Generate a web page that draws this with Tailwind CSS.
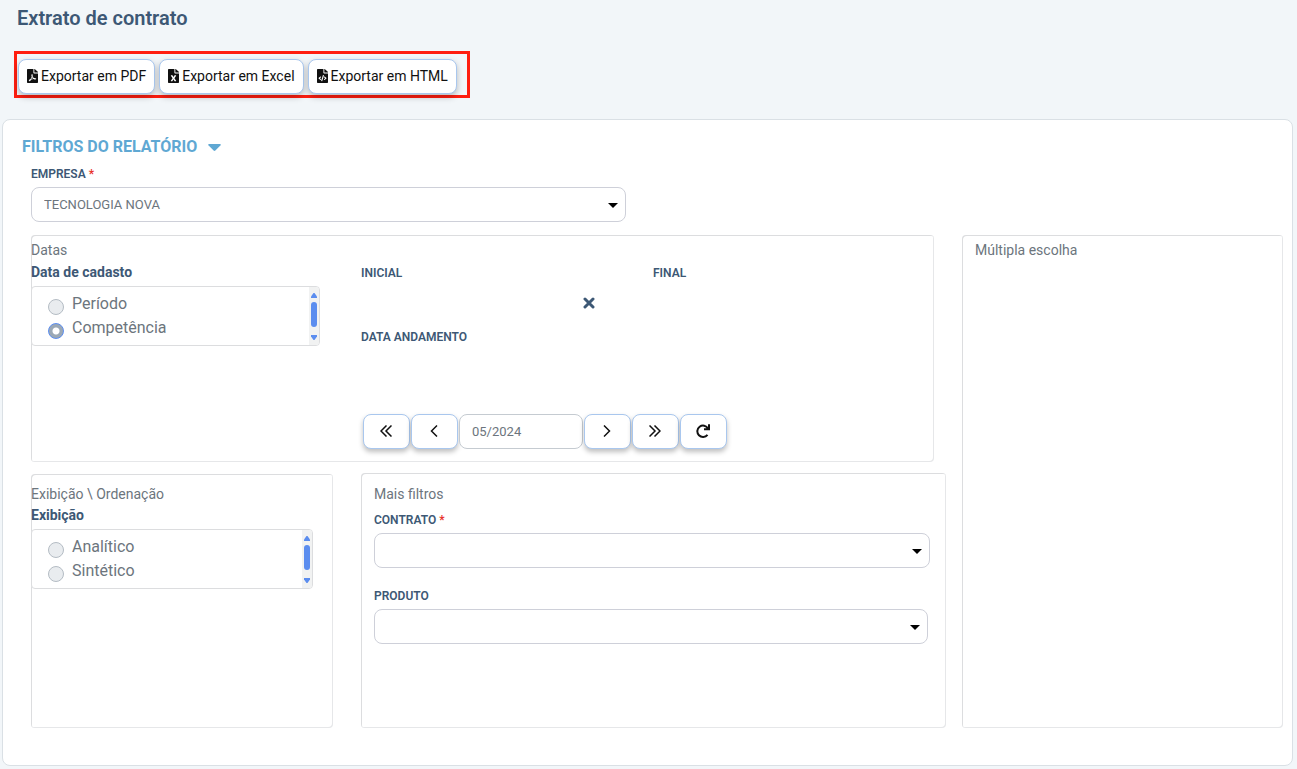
<!DOCTYPE html>
<html lang="pt-BR">
<head>
<meta charset="utf-8">
<meta name="viewport" content="width=device-width, initial-scale=1">
<title>Extrato de contrato</title>
<script src="https://cdn.jsdelivr.net/npm/@tailwindcss/browser@4"></script>
</head>
<body class="min-h-screen bg-[#f2f6f9] font-['Roboto',sans-serif] text-sm text-[#6c757d]">
<header class="px-[17px] pt-1.5">
  <h1 class="text-xl leading-6 font-semibold text-[#3d5875]">Extrato de contrato</h1>
</header>

<div class="mt-[21px] ml-[14px] flex w-fit gap-1 border-3 border-[#ff1e10] pt-[5px] pr-[10px] pb-px pl-px text-[#111]">
  <button type="button" class="flex h-[35px] items-center gap-[3px] rounded-lg border border-[#a9c7ee] bg-white px-2 pb-0.5 shadow-[0_3px_6px_rgba(0,0,0,0.25)]">
    <svg class="h-[14px] w-[11px]" viewBox="0 0 384 512" preserveAspectRatio="none" fill="currentColor" aria-hidden="true"><path d="M181.9 256.1c-5-16-4.9-46.9-2-46.9 8.4 0 7.6 36.9 2 46.9zm-1.7 47.2c-7.7 20.2-17.3 43.3-28.4 62.7 18.3-7 39-17.2 62.9-21.9-12.7-9.6-24.9-23.4-34.5-40.8zM86.1 428.1c0 .8 13.2-5.4 34.9-40.2-6.7 6.3-29.1 24.5-34.9 40.2zM248 160h136v328c0 13.3-10.7 24-24 24H24c-13.3 0-24-10.7-24-24V24C0 10.7 10.7 0 24 0h200v136c0 13.2 10.8 24 24 24zm-8 171.8c-20-12.2-33.3-29-42.7-53.8 4.5-18.5 11.6-46.6 6.2-64.2-4.7-29.4-42.4-26.5-47.8-6.8-5 18.3-.4 44.1 8.1 77-11.6 27.6-28.7 64.6-40.8 85.8-.1 0-.1.1-.2.1-27.1 13.9-73.6 44.5-54.5 68 5.6 6.9 16 10 21.5 10 17.9 0 35.7-18 61.1-61.8 25.8-8.5 54.1-19.1 79-23.2 21.7 11.8 47.1 19.5 64 19.5 29.2 0 31.2-32 19.7-43.4-13.9-13.6-54.3-9.7-73.6-7.2zM377 105L279 7c-4.5-4.5-10.6-7-17-7h-6v128h128v-6.1c0-6.3-2.5-12.4-7-16.9zm-74.1 255.3c4.1-2.7-2.5-11.9-42.8-9 37.1 15.8 42.8 9 42.8 9z"/></svg>
    Exportar em PDF
  </button>
  <button type="button" class="flex h-[35px] items-center gap-[3px] rounded-lg border border-[#a9c7ee] bg-white px-2 pb-0.5 shadow-[0_3px_6px_rgba(0,0,0,0.25)]">
    <svg class="h-[14px] w-[11px]" viewBox="0 0 384 512" preserveAspectRatio="none" fill="currentColor" aria-hidden="true"><path d="M224 136V0H24C10.7 0 0 10.7 0 24v464c0 13.3 10.7 24 24 24h336c13.3 0 24-10.7 24-24V160H248c-13.2 0-24-10.8-24-24zm60.1 106.5L224 336l60.1 93.5c5.1 8-.6 18.5-10.1 18.5h-34.9c-4.4 0-8.5-2.4-10.6-6.3C208.9 405.5 192 373 192 373c-6.4 14.8-10 20-36.6 68.8-2.1 3.9-6.1 6.3-10.5 6.3H110c-9.5 0-15.2-10.5-10.1-18.5l60.3-93.5-60.3-93.5c-5.2-8 .6-18.5 10.1-18.5h34.8c4.4 0 8.5 2.4 10.6 6.3 26.1 48.8 20 33.6 36.6 68.5 0 0 6.1-11.7 36.6-68.5 2.1-3.9 6.2-6.3 10.6-6.3H274c9.5-.1 15.2 10.4 10.1 18.4zM384 121.9v6.1H256V0h6.1c6.4 0 12.5 2.5 17 7l97.9 98c4.5 4.5 7 10.6 7 16.9z"/></svg>
    Exportar em Excel
  </button>
  <button type="button" class="flex h-[35px] items-center gap-[3px] rounded-lg border border-[#a9c7ee] bg-white px-2 pb-0.5 shadow-[0_3px_6px_rgba(0,0,0,0.25)]">
    <svg class="h-[14px] w-[11px]" viewBox="0 0 384 512" preserveAspectRatio="none" fill="currentColor" aria-hidden="true"><path d="M384 121.941V128H256V0h6.059c6.365 0 12.47 2.529 16.971 7.029l97.941 97.941A24.005 24.005 0 0 1 384 121.941zM248 160c-13.2 0-24-10.8-24-24V0H24C10.745 0 0 10.745 0 24v464c0 13.255 10.745 24 24 24h336c13.255 0 24-10.745 24-24V160H248zM123.206 400.505a5.4 5.4 0 0 1-7.633.246l-64.866-60.812a5.4 5.4 0 0 1 0-7.879l64.866-60.812a5.4 5.4 0 0 1 7.633.246l19.579 20.885a5.4 5.4 0 0 1-.372 7.747L101.65 336l40.763 35.874a5.4 5.4 0 0 1 .372 7.747l-19.579 20.884zm51.295 50.479l-27.453-7.97a5.402 5.402 0 0 1-3.681-6.692l61.44-211.626a5.402 5.402 0 0 1 6.692-3.681l27.452 7.97a5.4 5.4 0 0 1 3.68 6.692l-61.44 211.626a5.397 5.397 0 0 1-6.69 3.681zm160.792-111.045l-64.866 60.812a5.4 5.4 0 0 1-7.633-.246l-19.58-20.885a5.4 5.4 0 0 1 .372-7.747L284.35 336l-40.763-35.874a5.4 5.4 0 0 1-.372-7.747l19.58-20.885a5.4 5.4 0 0 1 7.633-.246l64.866 60.812a5.4 5.4 0 0 1-.001 7.879z"/></svg>
    Exportar em HTML
  </button>
</div>

<main class="mt-[21px] mr-1 mb-[3px] ml-0.5 rounded-lg border border-[#dae0e5] bg-white pt-[15px] pr-[9px] pb-[37px] pl-[19px]">
  <h2>
    <button type="button" class="flex items-center gap-[11px] text-base leading-6 font-bold text-[#5fa8d3]">
      FILTROS DO RELATÓRIO
      <svg class="h-[7px] w-[13px]" viewBox="0 0 13 7" fill="currentColor" aria-hidden="true"><path d="M1 0h11q1.4.3.4 1.4L7.4 6.500q-.9.800-1.800 0L.6 1.400Q-.4.300 1 0z"/></svg>
    </button>
  </h2>

  <form class="pl-[9px]">
    <label for="empresa" class="mt-[7px] block text-xs leading-4 font-semibold text-[#3d5875]">EMPRESA <span class="text-[#e8332a]">*</span></label>
    <div class="relative mt-[5px] w-[595px] max-w-full">
      <select id="empresa" class="block h-[35px] w-full appearance-none rounded-lg border border-[#ced0d9] bg-white px-3 pt-0.5 text-[13px] text-[#6c757d]">
        <option>TECNOLOGIA NOVA</option>
      </select>
      <svg class="pointer-events-none absolute top-4 right-2 h-[5px] w-[10px]" viewBox="0 0 10 5" fill="#000" aria-hidden="true"><path d="M0 0h10L5 5z"/></svg>
    </div>

    <div class="mt-[13px] grid grid-cols-[915fr_321fr] gap-4">
      <div class="flex flex-col gap-[11px]">
        <section class="mr-3 rounded-[4px] pt-[5px] pb-[13px] shadow-[inset_1px_1px_0_#dcdddf,inset_-1px_-1px_0_#e6e7e9]">
          <h3 class="leading-5">Datas</h3>
          <div class="mt-0.5 flex">
            <div class="w-[330px] shrink-0 pr-[41px]">
              <h4 id="cadastro" class="leading-5 font-bold text-[#3d5875]">Data de cadasto</h4>
              <div role="radiogroup" aria-labelledby="cadastro" class="mt-1 flex h-[60px] justify-between overflow-hidden rounded-[4px] border border-[#dcdddf] bg-white">
                <div class="pt-[5px] pl-4 text-base leading-6">
                  <label class="flex gap-2"><input type="radio" name="data" class="mt-[7px] size-4 appearance-none rounded-full border border-[#b4bcc4] bg-[#e9ecef]">Período</label>
                  <label class="flex gap-2"><input type="radio" name="data" checked class="mt-[7px] size-4 appearance-none rounded-full border border-[#5b8def] bg-[radial-gradient(circle,#fff_3px,#9ba8b5_4px)]">Competência</label>
                </div>
                <div class="flex w-[10px] flex-col items-center bg-[#f1f2f2] pt-[6px]" aria-hidden="true">
                  <svg class="h-[5px] w-[6px]" viewBox="0 0 6 5" fill="#5b8def"><path d="M2.500 0h1L6 3.500V5H0V3.500z"/></svg>
                  <span class="mt-1 h-[25px] w-[6px] rounded-full bg-[#5b8def]"></span>
                  <svg class="mt-2 h-[5px] w-[6px]" viewBox="0 0 6 5" fill="#5b8def"><path d="M2.500 5h1L6 1.500V0H0v1.500z"/></svg>
                </div>
              </div>
            </div>
            <div class="flex-1 pt-[3px]">
              <div class="flex text-xs leading-4 font-semibold text-[#3d5875]">
                <h4 class="w-[292px]">INICIAL</h4>
                <h4>FINAL</h4>
              </div>
              <div class="mt-[10px] flex w-[240px] justify-end">
                <button type="button" aria-label="Limpar" class="flex size-6 items-center justify-center text-[#3d5875]">
                  <svg class="size-3" viewBox="0 0 12 12" fill="none" stroke="currentColor" stroke-width="3" stroke-linecap="round" aria-hidden="true"><path d="M2 2l8 8M10 2l-8 8"/></svg>
                </button>
              </div>
              <h4 class="mt-[14px] text-xs leading-4 font-semibold text-[#3d5875]">DATA ANDAMENTO</h4>
              <div class="mt-[69px] flex gap-px pl-0.5 text-[#111]">
                <button type="button" aria-label="Primeiro" class="flex h-[35px] w-[47px] items-center justify-center rounded-lg border border-[#a9c7ee] bg-white pr-0.5 pb-0.5 shadow-[0_3px_5px_rgba(0,0,0,0.25)]"><svg class="h-3 w-3" viewBox="0 0 12 12" fill="none" stroke="currentColor" stroke-width="1.500" aria-hidden="true"><path d="M6.500.5L1 6l5.500 5.500M11.500.5L6 6l5.500 5.500"/></svg></button>
                <button type="button" aria-label="Anterior" class="flex h-[35px] w-[47px] items-center justify-center rounded-lg border border-[#a9c7ee] bg-white pr-0.5 pb-0.5 shadow-[0_3px_5px_rgba(0,0,0,0.25)]"><svg class="h-3 w-3" viewBox="0 0 12 12" fill="none" stroke="currentColor" stroke-width="1.500" aria-hidden="true"><path d="M9 .5L3.500 6 9 11.500"/></svg></button>
                <input type="text" aria-label="Competência" value="05/2024" class="h-[35px] w-[124px] rounded-lg border border-[#c5cbd1] bg-white px-3 text-[13px] text-[#6c757d]">
                <button type="button" aria-label="Próximo" class="flex h-[35px] w-[47px] items-center justify-center rounded-lg border border-[#a9c7ee] bg-white pr-0.5 pb-0.5 shadow-[0_3px_5px_rgba(0,0,0,0.25)]"><svg class="h-3 w-3" viewBox="0 0 12 12" fill="none" stroke="currentColor" stroke-width="1.500" aria-hidden="true"><path d="M3 .5L8.500 6 3 11.500"/></svg></button>
                <button type="button" aria-label="Último" class="flex h-[35px] w-[47px] items-center justify-center rounded-lg border border-[#a9c7ee] bg-white pr-0.5 pb-0.5 shadow-[0_3px_5px_rgba(0,0,0,0.25)]"><svg class="h-3 w-3" viewBox="0 0 12 12" fill="none" stroke="currentColor" stroke-width="1.500" aria-hidden="true"><path d="M.5.5L6 6 .5 11.500M5.500.5L11 6l-5.500 5.500"/></svg></button>
                <button type="button" aria-label="Atualizar" class="flex h-[35px] w-[47px] items-center justify-center rounded-lg border border-[#a9c7ee] bg-white pr-0.5 pb-0.5 shadow-[0_3px_5px_rgba(0,0,0,0.25)]"><svg class="size-[14px]" viewBox="0 0 14 14" fill="none" stroke="currentColor" stroke-width="2" aria-hidden="true"><path d="M11.500 10.800A5.700 5.700 0 1 1 12 4.500M13 .3v4.900H8"/></svg></button>
              </div>
            </div>
          </div>
        </section>

        <div class="flex gap-7">
          <section class="mt-px w-[302px] shrink-0 rounded-[4px] pt-[10px] pr-5 shadow-[inset_1px_1px_0_#dcdddf,inset_-1px_-1px_0_#e6e7e9]">
            <h3 class="leading-5">Exibição \ Ordenação</h3>
            <h4 id="exibicao" class="mt-px leading-5 font-bold text-[#3d5875]">Exibição</h4>
            <div role="radiogroup" aria-labelledby="exibicao" class="mt-1 flex h-[60px] justify-between overflow-hidden rounded-[4px] border border-[#dcdddf] bg-white">
              <div class="pt-[5px] pl-4 text-base leading-6">
                <label class="flex gap-2"><input type="radio" name="exibicao" class="mt-[7px] size-4 appearance-none rounded-full border border-[#b4bcc4] bg-[#e9ecef]">Analítico</label>
                <label class="flex gap-2"><input type="radio" name="exibicao" class="mt-[7px] size-4 appearance-none rounded-full border border-[#b4bcc4] bg-[#e9ecef]">Sintético</label>
              </div>
              <div class="flex w-[10px] flex-col items-center bg-[#f1f2f2] pt-[6px]" aria-hidden="true">
                <svg class="h-[5px] w-[6px]" viewBox="0 0 6 5" fill="#5b8def"><path d="M2.500 0h1L6 3.500V5H0V3.500z"/></svg>
                <span class="mt-1 h-[25px] w-[6px] rounded-full bg-[#5b8def]"></span>
                <svg class="mt-2 h-[5px] w-[6px]" viewBox="0 0 6 5" fill="#5b8def"><path d="M2.500 5h1L6 1.500V0H0v1.500z"/></svg>
              </div>
            </div>
          </section>

          <section class="flex-1 rounded-[4px] pt-[11px] pr-4 pb-21 pl-[13px] shadow-[inset_1px_1px_0_#dcdddf,inset_-1px_-1px_0_#e6e7e9]">
            <h3 class="leading-5">Mais filtros</h3>
            <label for="contrato" class="mt-2 block text-xs leading-4 font-semibold text-[#3d5875]">CONTRATO <span class="text-[#e8332a]">*</span></label>
            <div class="relative mt-[5px]">
              <select id="contrato" class="block h-[35px] w-full appearance-none rounded-lg border border-[#ced0d9] bg-white px-3 text-[13px]"><option></option></select>
              <svg class="pointer-events-none absolute top-4 right-2 h-[5px] w-[10px]" viewBox="0 0 10 5" fill="#000" aria-hidden="true"><path d="M0 0h10L5 5z"/></svg>
            </div>
            <label for="produto" class="mt-5 block text-xs leading-4 font-semibold text-[#3d5875]">PRODUTO</label>
            <div class="relative mt-[5px] mr-0.5">
              <select id="produto" class="block h-[35px] w-full appearance-none rounded-lg border border-[#ced0d9] bg-white px-3 text-[13px]"><option></option></select>
              <svg class="pointer-events-none absolute top-4 right-2 h-[5px] w-[10px]" viewBox="0 0 10 5" fill="#000" aria-hidden="true"><path d="M0 0h10L5 5z"/></svg>
            </div>
          </section>
        </div>
      </div>

      <section class="rounded-[4px] pt-[5px] pl-[13px] shadow-[inset_1px_1px_0_#dcdddf,inset_-1px_-1px_0_#e6e7e9]">
        <h3 class="leading-5">Múltipla escolha</h3>
      </section>
    </div>
  </form>
</main>
</body>
</html>
